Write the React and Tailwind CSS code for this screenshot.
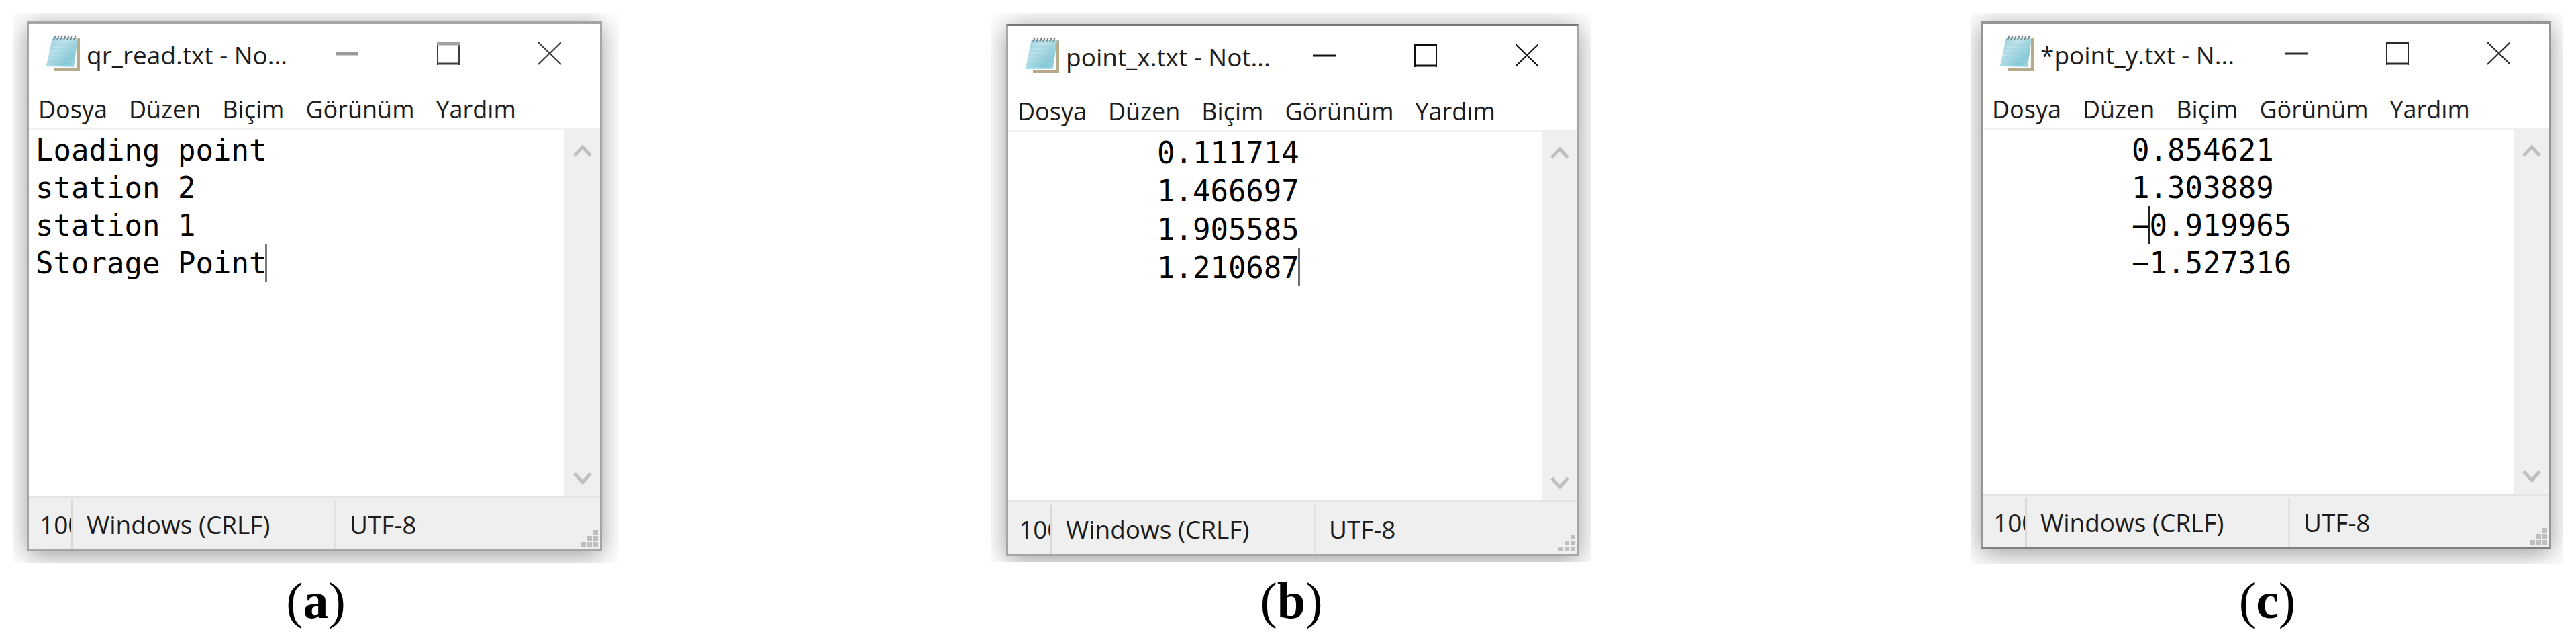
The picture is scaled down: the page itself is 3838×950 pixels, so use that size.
import React, { useState } from "react";
import clsx from "clsx";

const menuItems = ["Dosya", "Düzen", "Biçim", "Görünüm", "Yardım"];

const files = [
    {
        id: "a",
        title: "qr_read.txt - No...",
        content: "Loading point\nstation 2\nstation 1\nStorage Point",
        caret: { row: 3, col: 13 },
        caretColor: "bg-[#7d7d7d]",
        column: "col-start-1",
        shadowArea: "pt-[13px] pr-[25px] pb-[17px] pl-[21px]",
        border: "border-[3px] border-[#a6a6a6]",
        lineHeight: 56,
        areaHeight: "h-[544px]",
        controls: "text-[#3c3c3c]",
        soft: true,
    },
    {
        id: "b",
        title: "point_x.txt - Not...",
        content: "\t0.111714\n\t1.466697\n\t1.905585\n\t1.210687",
        caret: { row: 3, col: 16 },
        caretColor: "bg-[#6e6e6e]",
        column: "col-start-3",
        shadowArea: "pt-4 pr-[18px] pb-[9px] pl-[22px]",
        border: "border-[3px] border-[#a6a6a6] border-t-[#777777]",
        lineHeight: 57,
        areaHeight: "h-[548px]",
        controls: "text-[#111111]",
    },
    {
        id: "c",
        title: "*point_y.txt - N...",
        content: "\t0.854621\n\t1.303889\n\t−0.919965\n\t−1.527316",
        caret: { row: 2, col: 9 },
        caretColor: "bg-[#222222]",
        column: "col-start-5",
        shadowArea: "pt-[13px] pr-[18px] pb-[22px] pl-[14px]",
        border: "border-[3px] border-[#969696] border-b-[#808080]",
        lineHeight: 56,
        areaHeight: "h-[541px]",
        controls: "text-[#2a2a2a]",
    },
];

function NotepadIcon({ id }) {
    const gradient = "page-" + id;
    return (
        <svg className="h-[55px] w-[52px] shrink-0" viewBox="0 0 52 55" aria-hidden="true">
            <defs>
                <linearGradient id={gradient} x1="0" y1="0" x2="1" y2="1">
                    <stop offset="0" stopColor="#8fcbd8" />
                    <stop offset="0.35" stopColor="#bfe3ea" />
                    <stop offset="0.75" stopColor="#84c6d4" />
                    <stop offset="1" stopColor="#a9dbe4" />
                </linearGradient>
            </defs>
            <path d="M15 5H52V53H13V46Z" fill="#b8ab8b" />
            <path d="M15 5H48V49H11V46Z" fill="#fbfbf8" />
            <path d="M11 4H49L43 47L2 46Z" fill={`url(#${gradient})`} />
            <path d="M9 15H46M8 21H45M7 27H44M6 33H44M5 39H43" stroke="#9bd3df" strokeWidth="1" />
            <path d="M2 46L43 47" stroke="#a5e3ec" strokeWidth="2" />
            <path
                d="M13 7L16 1M18 7L21 1M23 7L26 1M28 7L31 1M33 7L36 1M38 7L41 1M43 7L46 1"
                stroke="#76868a"
                strokeWidth="2"
            />
        </svg>
    );
}

function WindowControls({ file }) {
    const button = "flex h-[68px] w-[151px] items-center justify-center";
    return (
        <div className={clsx("flex shrink-0", file.controls)}>
            <button type="button" aria-label="Minimize" className={button}>
                <svg className="h-[35px] w-[34px]" viewBox="0 0 34 35">
                    {file.soft
                        ? <path d="M0 18H34" stroke="#9a9a9a" strokeWidth="5" />
                        : <path d="M0 18H34" stroke="currentColor" strokeWidth="3" />}
                </svg>
            </button>
            <button type="button" aria-label="Maximize" className={button}>
                <svg className="h-[35px] w-[34px]" viewBox="0 0 34 35" fill="none" stroke="currentColor">
                    <path d="M1 0V35M33 0V35" strokeWidth="2" />
                    {file.soft
                        ? <path d="M0 3H34" stroke="#a3a3a3" strokeWidth="5" />
                        : <path d="M0 2H34" strokeWidth="3" />}
                    <path d="M0 33H34" strokeWidth="3" />
                </svg>
            </button>
            <button type="button" aria-label="Close" className={button}>
                <svg className="h-[35px] w-[34px]" viewBox="0 0 34 35" fill="none" stroke="currentColor">
                    <path d="M0 1L34 34M34 1L0 34" strokeWidth="2" />
                </svg>
            </button>
        </div>
    );
}

function ScrollBar() {
    return (
        <div className="flex w-[53px] shrink-0 flex-col items-center justify-between bg-[#efefef] pt-6 pb-4">
            <button type="button" aria-label="Scroll up">
                <svg className="h-5 w-7" viewBox="0 0 28 20" fill="none" stroke="#c0c0c0" strokeWidth="5">
                    <path d="M2 17L14 4L26 17" />
                </svg>
            </button>
            <button type="button" aria-label="Scroll down">
                <svg className="h-5 w-7" viewBox="0 0 28 20" fill="none" stroke="#c0c0c0" strokeWidth="5">
                    <path d="M2 3L14 16L26 3" />
                </svg>
            </button>
        </div>
    );
}

function Editor({ file }) {
    const [text, setText] = useState(file.content);
    const { row, col } = file.caret;

    return (
        <div className="flex">
            <div className="relative min-w-0 flex-1 border-t-[3px] border-[#f2f2f2] font-['DejaVu_Sans_Mono',monospace] text-[44px]">
                <textarea
                    aria-label={file.title}
                    className={clsx("block w-full resize-none overflow-hidden bg-white pt-0.5 pl-[10px] text-black outline-none [tab-size:8]", file.areaHeight)}
                    style={{ lineHeight: file.lineHeight + "px" }}
                    spellCheck={false}
                    wrap="off"
                    value={text}
                    onChange={(e) => setText(e.target.value)}
                />
                <span
                    className={clsx("absolute mt-px ml-2 h-[57px] w-[3px]", file.caretColor)}
                    style={{ left: col + "ch", top: row * file.lineHeight + "px" }}
                />
            </div>
            <ScrollBar />
        </div>
    );
}

function StatusBar() {
    return (
        <div className="flex h-[80px] items-stretch border-t-[3px] border-[#e4e4e4] bg-[#efefef] pt-1 text-[37px] leading-[72px]">
            <div className="w-[66px] shrink-0 overflow-hidden border-r-[3px] border-[#d9d9d9] pl-4 whitespace-nowrap">100</div>
            <div className="w-[392px] shrink-0 border-r-[3px] border-[#e2e2e2] pl-5 whitespace-nowrap">Windows (CRLF)</div>
            <div className="flex-1 pl-5">UTF-8</div>
            <svg className="mr-[3px] mb-1 h-[25px] w-[25px] self-end" viewBox="0 0 25 25" fill="#bfbfbf" aria-hidden="true">
                <path d="M18 0h7v7h-7zM9 9h7v7h-7zM18 9h7v7h-7zM0 18h7v7h-7zM9 18h7v7h-7zM18 18h7v7h-7z" />
            </svg>
        </div>
    );
}

function NotepadWindow({ file }) {
    return (
        <div className={clsx("overflow-hidden", file.shadowArea)}>
            <div className={clsx("bg-white font-['Open_Sans',sans-serif] text-[#1c1c1c] shadow-[0_6px_36px_rgba(0,0,0,0.4)]", file.border)}>
                <div className="flex h-[92px] items-start">
                    <div className="flex min-w-0 flex-1 items-start gap-[10px] pt-[17px] pl-6">
                        <NotepadIcon id={file.id} />
                        <h2 className="pt-1 text-[37px] leading-[52px] whitespace-nowrap">{file.title}</h2>
                    </div>
                    <div className="pt-[10px]">
                        <WindowControls file={file} />
                    </div>
                </div>
                <nav className="flex h-16 items-center gap-8 pt-2 pl-[14px]">
                    {menuItems.map((item) => (
                        <button key={item} type="button" className="text-[36px] leading-[52px]">{item}</button>
                    ))}
                </nav>
                <Editor file={file} />
                <StatusBar />
            </div>
        </div>
    );
}

function App() {
    return (
        <main className="grid grid-cols-[903fr_555fr_894fr_566fr_882fr] bg-white px-[19px] pt-[19px]">
            {files.map((file) => (
                <figure key={file.id} className={clsx("row-start-1 flex min-w-0 flex-col justify-between", file.column)}>
                    <NotepadWindow file={file} />
                    <figcaption className="pt-3 text-center font-['Liberation_Serif',serif] text-[76px] leading-[84px] text-black">
                        (<b>{file.id}</b>)
                    </figcaption>
                </figure>
            ))}
        </main>
    );
}

export default App;
